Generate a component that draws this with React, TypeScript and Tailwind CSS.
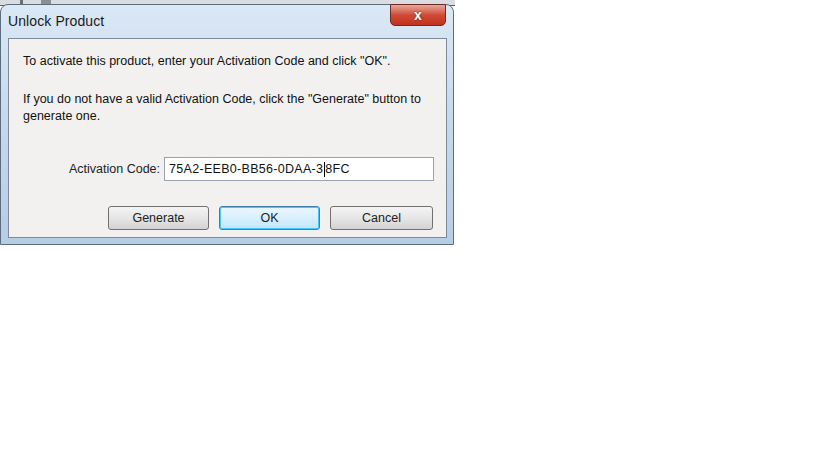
import React from "react";

export default function App() {
  const font = { fontFamily: '"Liberation Sans", Arial, sans-serif' };
  return (
    <div className="w-[819px] h-[460px] bg-white relative overflow-hidden" style={font}>
      {/* background strip behind the window */}
      <div className="w-[455px] h-[6px] bg-[#d9dde2] border-b border-[#5a5f66] flex">
        <div className="w-[20px]" />
        <div className="w-[3px] h-[5px] bg-[#6b6f75]" />
        <div className="w-[18px]" />
        <div className="w-[10px] h-[5px] bg-[#8a8f96]" />
      </div>
      {/* window */}
      <div className="relative -mt-[2px] w-[454px] h-[241px] rounded-t-[8px] border border-[#5d6d80] bg-gradient-to-b from-[#dbe8f5] via-[#c4d9ee] to-[#b6cde6] flex flex-col">
        <div className="h-[33px] flex items-start justify-between pl-[7px] pr-[7px]">
          <div className="text-[14px] text-[#1a1a1a] mt-[6px] tracking-[0.1px]">Unlock Product</div>
          <div className="mt-[-1px] w-[56px] h-[22px] rounded-b-[5px] border border-[#6e2b22] bg-gradient-to-b from-[#e8a89a] via-[#cf4a36] to-[#c0321f] flex items-center justify-center">
            <span className="text-white font-bold text-[14px] leading-none" style={{ textShadow: "0 0 2px #5a1a10" }}>x</span>
          </div>
        </div>
        <div className="ml-[7px] mr-[6px] mt-[0px] h-[200px] border border-[#7f8a96] bg-[#f2f1ef] text-[12.5px] text-[#111] flex flex-col">
          <div className="pl-[14px] pt-[15px] leading-[14px]">To activate this product, enter your Activation Code and click "OK".</div>
          <div className="pl-[14px] pt-[23px] leading-[17px]">
            If you do not have a valid Activation Code, click the "Generate" button to
            <br />
            generate one.
          </div>
          <div className="flex items-center mt-[32px] pl-[60px]">
            <span className="text-[#222]">Activation Code:</span>
            <div className="ml-[4px] w-[270px] h-[24px] bg-white border border-[#9aa3ad] flex items-center pl-[4px] text-[#111] tracking-[0.3px]">
              75A2-EEB0-BB56-0DAA-3<span className="inline-block w-[1px] h-[15px] bg-black mx-[0.5px]" />8FC
            </div>
          </div>
          <div className="flex mt-[25px] pl-[99px] gap-[10px]">
            <div className="w-[101px] h-[24px] rounded-[3px] border border-[#707070] bg-gradient-to-b from-[#f4f4f4] via-[#e6e6e6] to-[#d3d3d3] flex items-center justify-center text-[#222]">Generate</div>
            <div className="w-[101px] h-[24px] rounded-[3px] border border-[#3c7fb1] bg-gradient-to-b from-[#eaf6fd] via-[#d9f0fc] to-[#bee6fd] flex items-center justify-center text-[#222] shadow-[inset_0_0_0_1px_#48c8f8]">OK</div>
            <div className="w-[103px] h-[24px] rounded-[3px] border border-[#707070] bg-gradient-to-b from-[#f4f4f4] via-[#e6e6e6] to-[#d3d3d3] flex items-center justify-center text-[#222]">Cancel</div>
          </div>
        </div>
      </div>
    </div>
  );
}
